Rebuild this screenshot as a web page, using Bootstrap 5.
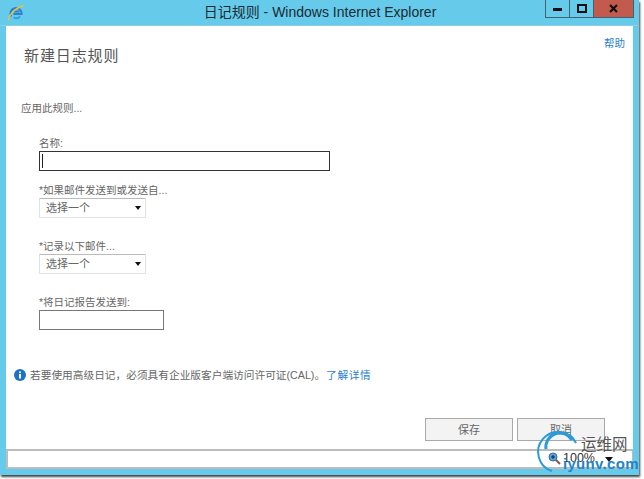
<!DOCTYPE html>
<html lang="zh"><head><meta charset="utf-8"><title>日记规则</title>
<link href="https://cdn.jsdelivr.net/npm/bootstrap@5.3.0/dist/css/bootstrap.min.css" rel="stylesheet">
<style>
html,body{margin:0;height:479px;overflow:hidden;background:#fff}
body{font-family:"Liberation Sans","Noto Sans CJK SC",sans-serif;font-size:11px;color:#666}
.win{width:639px;height:475px;background:#66cbea;box-shadow:1px 2px 2px #444;display:flex;flex-direction:column;padding:0 6px 6px}
.tbar{height:26px;flex:none;border-bottom:1px solid #8fcfe4;margin:0 -6px;position:relative;display:flex;justify-content:center;padding:3px 0 0 1px;color:#1a2a33;font-size:14px;line-height:19px}
.tbar svg.ie{position:absolute;left:8px;top:5px}
.ctrls{position:absolute;left:545px;top:0;display:flex;height:18px;border:1px solid #3f6470;border-top:0}
.ctrl{width:24px;border-right:1px solid #3f6470;display:flex;align-items:center;justify-content:center}
.ctrl.cl{width:39px;background:#c25b4e;border-right:0}
.pane{flex:1;background:#fff;display:flex;flex-direction:column;min-height:0;position:relative}
.top{height:74px;flex:none;display:flex;justify-content:space-between}
.ttl{font-size:15px;color:#555;padding:19px 0 0 18px;line-height:22px;letter-spacing:.9px}
.hlp{color:#1f7fce;padding:10px 8px 0 0;line-height:14px;font-size:10.5px}
.sub{padding-left:15px;line-height:16px;height:16px;font-size:10.5px;margin-bottom:0}
.frm{padding:19px 0 0 33px;height:252px}
.lab{line-height:16px;font-size:10.5px;margin:0;height:16px;white-space:nowrap}
.f1{width:291px;height:20px;border:1px solid #333;margin-bottom:11px;display:flex;align-items:center;padding-left:2px}
.caret{width:1px;height:14px;background:#222}
.pick{width:107px;height:20px;border:1px solid #dce3e8;border-top-color:#bbb;display:flex;align-items:center;justify-content:space-between;padding:0 4px 0 6px;font-size:11px;margin-bottom:20px;color:#666}
.pick i{width:0;height:0;border:3px solid transparent;border-top:4px solid #111;border-bottom:0}
.f2{width:125px;height:20px;border:1px solid #777}
.info{display:flex;align-items:center;gap:4px;padding-left:8px;font-size:10.7px;line-height:14px;height:14px;color:#666;white-space:nowrap}
.lnk{color:#1f7fce;text-decoration:none;margin-left:1px;letter-spacing:.6px}
.btnz{display:flex;justify-content:flex-end;gap:4px;padding:36px 28px 0 0}
.bb{width:88px;height:23px;border:1px solid #a9a9a9;background:#f3f3f3;color:#666;border-radius:0;padding:0;font-size:11px;line-height:20px}
.stat{margin-top:auto;height:20px;border:2px solid #bcbcbc;border-width:2px 1px 2px 2px;background:#fff;flex:none}
.wm{position:absolute;left:530px;top:425px;width:114px;height:54px}
.wm span{position:absolute;white-space:nowrap}
.mk1{left:51px;top:9px;font-size:15.5px;color:#555;line-height:18px;font-family:"Noto Sans CJK SC",sans-serif}
.mk3{left:33px;top:26px;font-size:12.5px;color:#333;line-height:14px}
.mk2{left:33px;top:30px;font-size:15px;font-weight:700;color:#2383c8;line-height:18px;letter-spacing:.3px}
</style></head>
<body>
<div class="win">
  <div class="tbar">
    <svg class="ie" width="16" height="16" viewBox="0 0 16 16"><path d="M3.2 11.5A5.6 5.6 0 1 1 13.6 8.9H5.4M5.4 6.4h6" fill="none" stroke="#2f7fd0" stroke-width="2"/><path d="M5.5 12.2c2.2 1.5 5 1 6.6-.8" fill="none" stroke="#2f9fe0" stroke-width="1.8"/><path d="M.8 15C-.2 12.5 6 3 15.5.8" fill="none" stroke="#e8c23a" stroke-width="1.5"/></svg>
    <span>日记规则 - Windows Internet Explorer</span>
    <div class="ctrls">
      <div class="ctrl"><svg width="10" height="4"><rect y="1" width="9" height="3" fill="#111"/></svg></div>
      <div class="ctrl"><svg width="10" height="9"><rect x="1" y="1" width="8" height="7" fill="none" stroke="#111" stroke-width="2"/></svg></div>
      <div class="ctrl cl"><svg width="10" height="9"><path d="M1 1l7 7M8 1L1 8" stroke="#111" stroke-width="2.2"/></svg></div>
    </div>
  </div>
  <div class="pane">
    <div class="top"><div class="ttl">新建日志规则</div><a class="hlp text-decoration-none">帮助</a></div>
    <p class="sub">应用此规则...</p>
    <div class="frm">
      <p class="lab">名称:</p>
      <div class="f1"><span class="caret"></span></div>
      <p class="lab">*如果邮件发送到或发送自...</p>
      <div class="pick"><span>选择一个</span><i></i></div>
      <p class="lab">*记录以下邮件...</p>
      <div class="pick"><span>选择一个</span><i></i></div>
      <p class="lab">*将日记报告发送到:</p>
      <div class="f2"></div>
    </div>
    <div class="info">
      <svg width="12" height="12" viewBox="0 0 12 12"><circle cx="6" cy="6" r="6" fill="#1a73c4"/><rect x="5" y="5" width="2" height="4.5" fill="#fff"/><rect x="5" y="2.5" width="2" height="1.6" fill="#fff"/></svg>
      <span>若要使用高级日记，必须具有企业版客户端访问许可证(CAL)。<a class="lnk">了解详情</a></span>
    </div>
    <div class="btnz"><button class="btn bb">保存</button><button class="btn bb">取消</button></div>
    <div class="stat"></div>
  </div>
</div>
<div class="wm">
  <svg width="90" height="54" viewBox="0 0 90 54" class="position-absolute top-0 start-0"><path d="M46 18A20 20 0 1 0 22 46" fill="none" stroke="#2a9ad8" stroke-width="2"/><path d="M42 15A14 14 0 0 0 16 24" fill="none" stroke="#2a9ad8" stroke-width="3"/><circle cx="23" cy="32" r="4" fill="#5aa5dd" stroke="#2d6ea8"/><path d="M21 32h4M23 30v4" stroke="#123" stroke-width="1"/><path d="M26 35l4 4" stroke="#855" stroke-width="2"/><path d="M75 32h8l-4 5z" fill="#111"/></svg>
  <span class="mk1">运维网</span><span class="mk3">100%</span><span class="mk2">iyunv.com</span>
</div>
</body></html>
